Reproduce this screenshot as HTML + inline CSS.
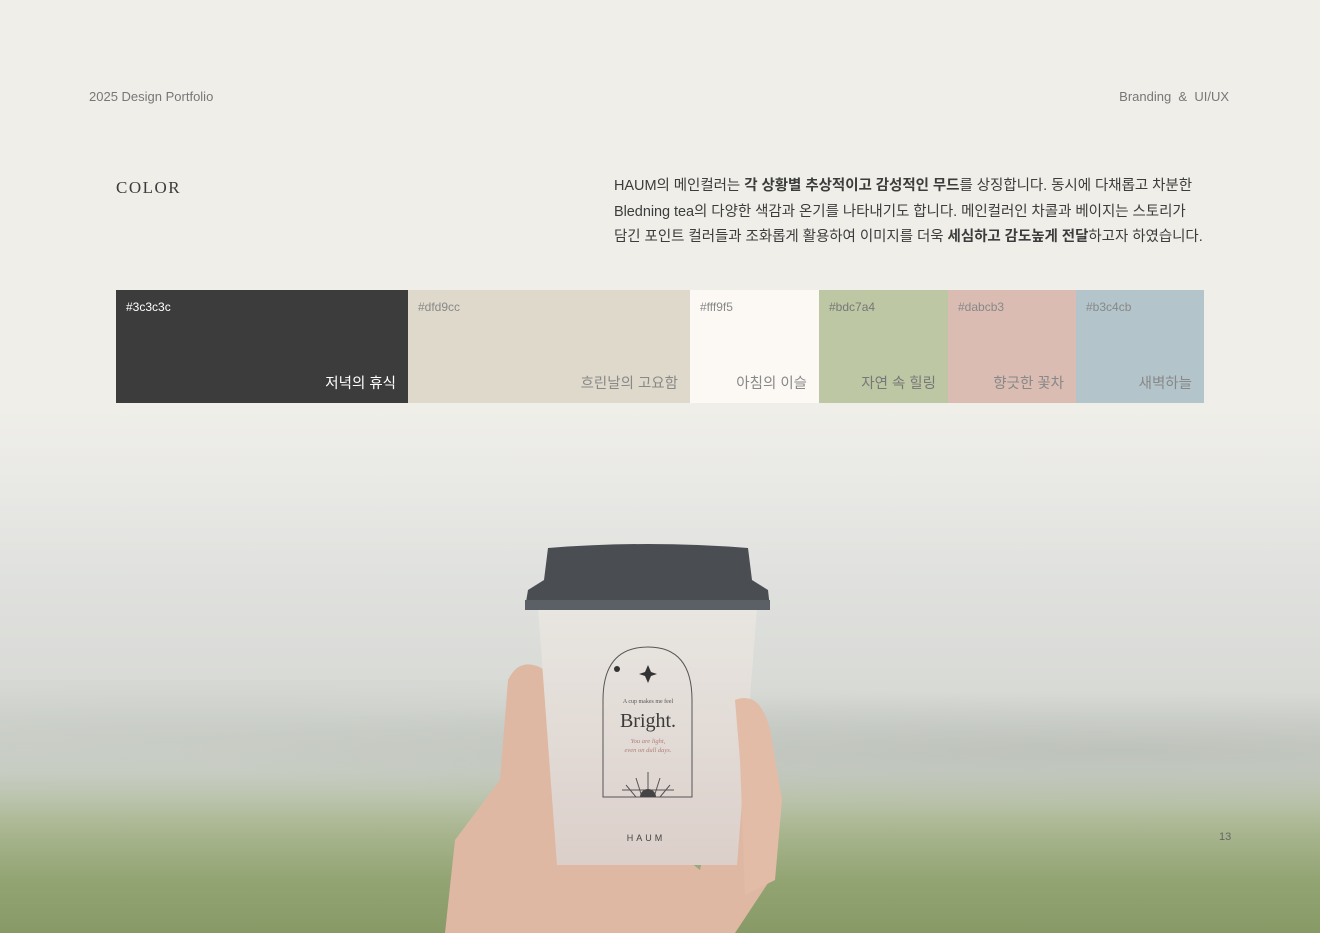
<!DOCTYPE html>
<html><head><meta charset="utf-8"><style>
*{margin:0;padding:0;box-sizing:border-box}
body{width:1320px;height:933px;overflow:hidden;position:relative;font-family:"Liberation Sans","Noto Sans CJK KR",sans-serif;background:#efeee9}
.bg{position:absolute;left:0;top:0;width:1320px;height:933px;background:linear-gradient(180deg,#efeee9 0px,#efeee9 410px,#e9e9e6 480px,#e0e1de 580px,#d8dad6 690px,#cbd0c6 770px,#a9b690 830px,#93a473 880px,#879a66 933px)}
.fog{position:absolute;left:0;top:680px;width:1320px;height:140px;background:radial-gradient(ellipse at 85% 50%,rgba(170,175,170,.45),transparent 60%),radial-gradient(ellipse at 15% 40%,rgba(185,190,185,.35),transparent 60%)}
.t{position:absolute;font-size:13px;color:#777}
.para{position:absolute;left:614px;top:174px;font-size:14.5px;line-height:25.5px;color:#3c3c3c;white-space:nowrap;letter-spacing:-.05px}
.para b{font-weight:700}
.sw{position:absolute;top:290px;height:113px}
.sw .h{position:absolute;left:10px;top:10px;font-size:12px}
.sw .n{position:absolute;right:12px;bottom:10px;font-size:14.5px}
</style></head><body>
<div class="bg"></div><div class="fog"></div>
<div class="t" style="left:89px;top:89px">2025 Design Portfolio</div>
<div class="t" style="right:91px;top:89px">Branding &nbsp;&amp;&nbsp; UI/UX</div>
<div style="position:absolute;left:116px;top:178px;font-family:'Liberation Serif',serif;font-size:17px;letter-spacing:1.5px;color:#3c3c3c">COLOR</div>
<div class="para">HAUM의 메인컬러는 <b>각 상황별 추상적이고 감성적인 무드</b>를 상징합니다. 동시에 다채롭고 차분한<br>Bledning tea의 다양한 색감과 온기를 나타내기도 합니다. 메인컬러인 차콜과 베이지는 스토리가<br>담긴 포인트 컬러들과 조화롭게 활용하여 이미지를 더욱 <b>세심하고 감도높게 전달</b>하고자 하였습니다.</div>
<div class="sw" style="left:116px;width:292px;background:#3c3c3c;color:#fff"><span class="h">#3c3c3c</span><span class="n">저녁의 휴식</span></div>
<div class="sw" style="left:408px;width:282px;background:#dfd9cc;color:#888"><span class="h">#dfd9cc</span><span class="n">흐린날의 고요함</span></div>
<div class="sw" style="left:690px;width:129px;background:#fcf9f5;color:#888"><span class="h">#fff9f5</span><span class="n">아침의 이슬</span></div>
<div class="sw" style="left:819px;width:129px;background:#bdc7a4;color:#777"><span class="h">#bdc7a4</span><span class="n">자연 속 힐링</span></div>
<div class="sw" style="left:948px;width:128px;background:#dabcb3;color:#888"><span class="h">#dabcb3</span><span class="n">향긋한 꽃차</span></div>
<div class="sw" style="left:1076px;width:128px;background:#b3c4cb;color:#888"><span class="h">#b3c4cb</span><span class="n">새벽하늘</span></div>
<svg style="position:absolute;left:0;top:0" width="1320" height="933">
<defs><linearGradient id="c" x1="0" y1="0" x2="0" y2="1"><stop offset="0" stop-color="#e8e6e1"/><stop offset="1" stop-color="#dccfca"/></linearGradient></defs>
<path d="M445 933 L455 840 L500 780 L508 680 Q520 655 545 670 L560 760 L700 870 L735 700 Q760 690 770 730 L782 800 L770 880 L735 933Z" fill="#dfb8a3"/>
<path d="M538 608 L757 608 L737 865 L557 865Z" fill="url(#c)"/>
<path d="M548 548 Q648 540 748 548 L752 580 L768 590 L770 608 L525 608 L528 590 L544 580Z" fill="#4a4e53"/>
<path d="M525 600 L770 600 L770 610 L525 610Z" fill="#5b6066"/>
<path d="M735 700 Q760 690 770 730 L782 800 L775 880 L745 895 L740 760Z" fill="#e2bca7"/>
<path d="M603 797 L603 700 Q603 647 648 647 Q692 647 692 700 L692 797Z" fill="none" stroke="#555" stroke-width="1"/>
<path d="M648 665 L651 672 L657 674 L651 676 L648 683 L645 676 L639 674 L645 672Z" fill="#333"/>
<circle cx="617" cy="669" r="3" fill="#333"/>
<path d="M622 790 L674 790 M648 797 L648 772 M636 797 L626 785 M660 797 L670 785 M642 797 L636 778 M654 797 L660 778" stroke="#555" stroke-width="1" fill="none"/>
<path d="M640 797 A8 8 0 0 1 656 797Z" fill="#444"/>
<text x="648" y="727" text-anchor="middle" font-family="Liberation Serif,serif" font-size="20" fill="#3a3a3a">Bright.</text>
<text x="648" y="703" text-anchor="middle" font-family="Liberation Serif,serif" font-size="6" fill="#555">A cup makes me feel</text>
<text x="648" y="743" text-anchor="middle" font-family="Liberation Serif,serif" font-style="italic" font-size="6.5" fill="#b08078">You are light,</text>
<text x="648" y="752" text-anchor="middle" font-family="Liberation Serif,serif" font-style="italic" font-size="6.5" fill="#b08078">even on dull days.</text>
<text x="646" y="841" text-anchor="middle" font-family="Liberation Sans,sans-serif" font-size="9" letter-spacing="3" fill="#444">HAUM</text>
</svg>
<div class="t" style="left:1219px;top:831px;font-size:11px;color:#666">13</div>
</body></html>
